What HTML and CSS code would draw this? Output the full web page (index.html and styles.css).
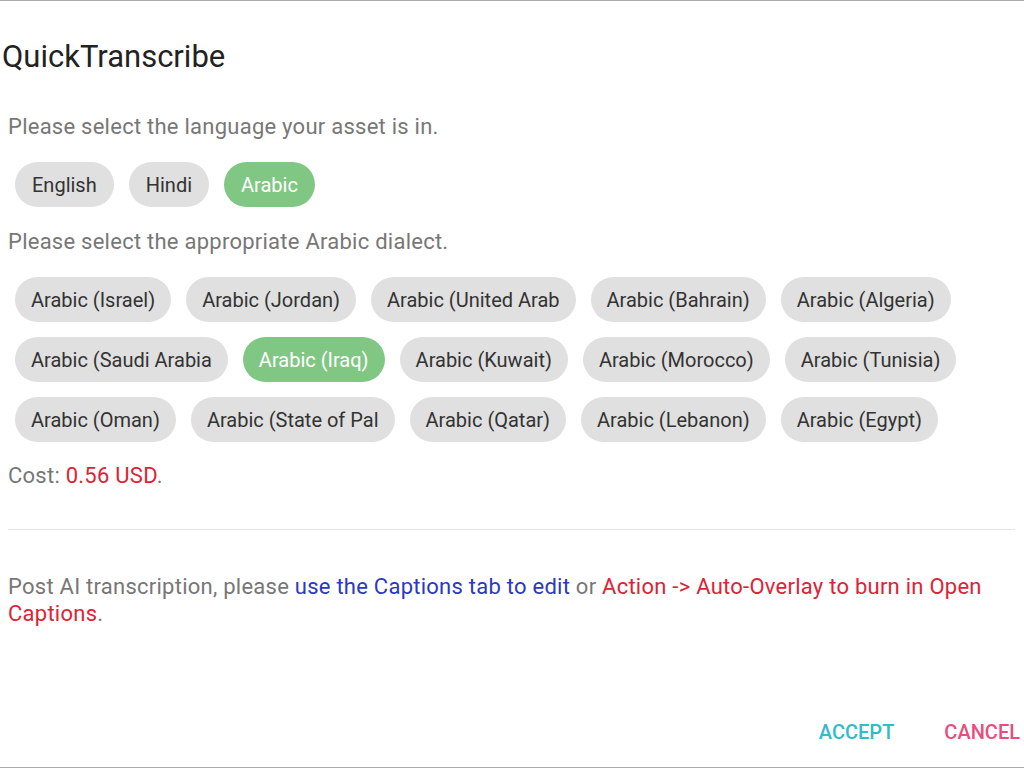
FILE: index.html
```html
<!DOCTYPE html>
<html>
<head>
<meta charset="utf-8">
<link rel="stylesheet" href="styles.css">
</head>
<body>
<div class="dialog">
  <h2 class="title">QuickTranscribe</h2>
  <p class="hint hint-lang">Please select the language your asset is in.</p>
  <div class="chips chips-lang">
    <span class="chip">English</span>
    <span class="chip">Hindi</span>
    <span class="chip chip-on">Arabic</span>
  </div>
  <p class="hint hint-dialect">Please select the appropriate Arabic dialect.</p>
  <div class="chips chips-dialect">
    <span class="chip">Arabic (Israel)</span>
    <span class="chip">Arabic (Jordan)</span>
    <span class="chip">Arabic (United Arab</span>
    <span class="chip">Arabic (Bahrain)</span>
    <span class="chip">Arabic (Algeria)</span>
    <span class="chip">Arabic (Saudi Arabia</span>
    <span class="chip chip-on">Arabic (Iraq)</span>
    <span class="chip">Arabic (Kuwait)</span>
    <span class="chip">Arabic (Morocco)</span>
    <span class="chip">Arabic (Tunisia)</span>
    <span class="chip">Arabic (Oman)</span>
    <span class="chip">Arabic (State of Pal</span>
    <span class="chip">Arabic (Qatar)</span>
    <span class="chip">Arabic (Lebanon)</span>
    <span class="chip">Arabic (Egypt)</span>
  </div>
  <p class="hint cost">Cost: <span class="red">0.56 USD</span>.</p>
  <hr class="divider">
  <p class="hint note">Post AI transcription, please <span class="blue">use the Captions tab to edit</span> or <span class="red">Action -&gt; Auto-Overlay to burn in Open Captions</span>.</p>
  <div class="actions">
    <button class="btn btn-accept">Accept</button>
    <button class="btn btn-cancel">Cancel</button>
  </div>
</div>
</body>
</html>
```

FILE: styles.css
```css
html, body {
  margin: 0;
  padding: 0;
  background: #fff;
}
body {
  font-family: Roboto, "Liberation Sans", sans-serif;
}
.dialog {
  box-sizing: border-box;
  height: 768px;
  border-top: 1px solid #ababab;
  border-bottom: 1px solid #ababab;
  display: flex;
  flex-direction: column;
}
.title {
  margin: 38px 0 0 2px;
  font-size: 31px;
  line-height: 36px;
  font-weight: 400;
  color: #222;
}
.hint {
  margin: 0;
  padding-left: 8px;
  font-size: 22px;
  letter-spacing: 0.25px;
  line-height: 24px;
  color: #777;
}
.hint-lang { margin-top: 40px; }
.chips {
  display: flex;
  flex-wrap: wrap;
  gap: 15px;
  padding-left: 15px;
  padding-right: 40px;
}
.chips-lang { margin-top: 23px; }
.chips-lang .chip { padding: 0 17px; }
.hint-dialect { margin-top: 23px; }
.chips-dialect { margin-top: 23px; }
.chip {
  box-sizing: border-box;
  height: 45px;
  display: flex;
  align-items: center;
  padding: 0 16px;
  border-radius: 23px;
  background: #e0e0e0;
  color: #333;
  font-size: 20px;
  white-space: nowrap;
}
.chip-on {
  background: #81c784;
  color: #fff;
}
.cost { margin-top: 22px; }
.red { color: #e02235; }
.blue { color: #2b38c4; }
.divider {
  margin: 41px 9px 0 8px;
  border: 0;
  border-top: 1px solid #e4e4e4;
  height: 0;
}
.note {
  margin-top: 43px;
  line-height: 27px;
  padding-right: 20px;
}
.actions {
  margin-top: auto;
  margin-bottom: 23px;
  display: flex;
  justify-content: flex-end;
  gap: 50px;
  padding-right: 4px;
}
.btn {
  border: 0;
  background: none;
  padding: 0;
  font-family: Roboto, "Liberation Sans", sans-serif;
  font-size: 20px;
  font-weight: 500;
  line-height: 24px;
  text-transform: uppercase;
}
.btn-accept { color: #2fbccd; }
.btn-cancel { color: #ea4c7d; }
```
